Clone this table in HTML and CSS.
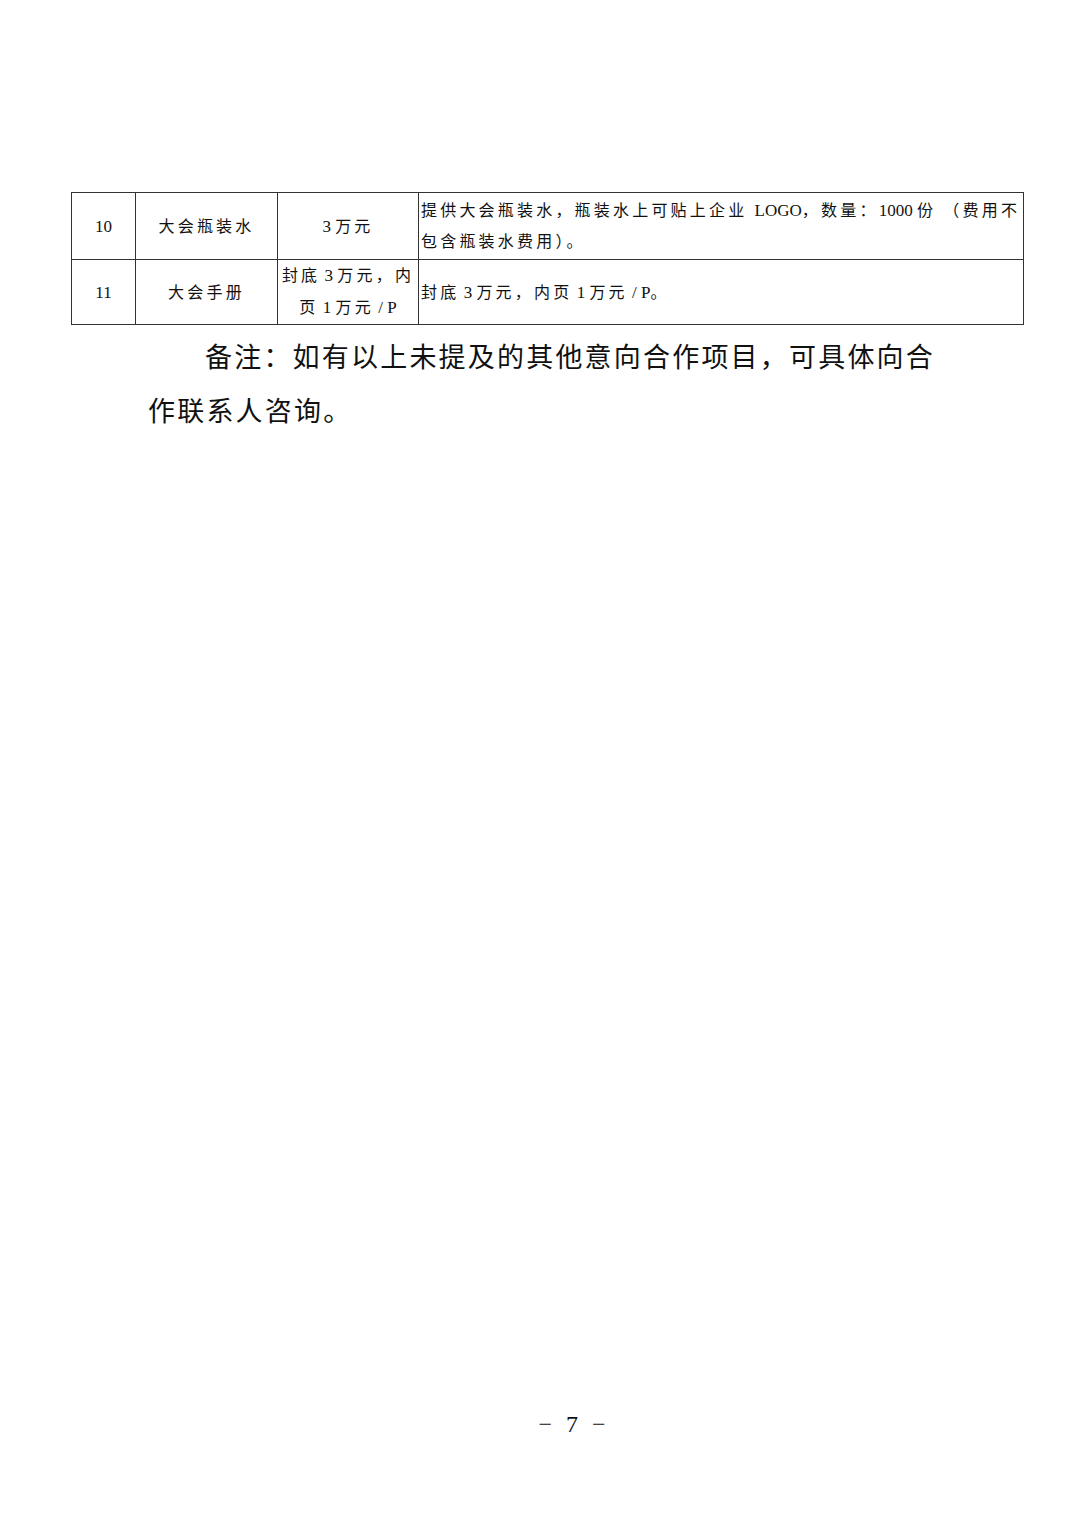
FILE: index.html
```html
<!DOCTYPE html>
<html lang="zh-CN">
<head>
<meta charset="utf-8">
<link rel="stylesheet" href="styles.css">
</head>
<body>
<div class="page">
  <table class="items">
    <colgroup>
      <col class="c-no"><col class="c-name"><col class="c-price"><col class="c-desc">
    </colgroup>
    <tr class="r1">
      <td class="num">10</td>
      <td class="mid">大会瓶装水</td>
      <td class="mid"><span class="lat">3 </span>万元</td>
      <td class="desc">提供大会瓶装水，瓶装水上可贴上企业 <span class="lat">LOGO</span>，数量：<span class="lat">1000 </span>份 （费用不包含瓶装水费用）。</td>
    </tr>
    <tr class="r2">
      <td class="num">11</td>
      <td class="mid">大会手册</td>
      <td class="mid price2">封底<span class="lat"> 3 </span>万元，内<br>页<span class="lat"> 1 </span>万元<span class="lat"> / P</span></td>
      <td class="desc">封底<span class="lat"> 3 </span>万元，内页<span class="lat"> 1 </span>万元<span class="lat"> / P</span>。</td>
    </tr>
  </table>
  <p class="note">备注：如有以上未提及的其他意向合作项目，可具体向合作联系人咨询。</p>
  <div class="pageno"><span>−</span><span>7</span><span>−</span></div>
</div>
</body>
</html>
```
FILE: styles.css
```css
html, body {
  margin: 0;
  padding: 0;
  background: #fff;
}
.page {
  width: 1080px;
  height: 1527px;
  box-sizing: border-box;
  padding-top: 192px;
  display: flex;
  flex-direction: column;
  font-family: "Liberation Serif", "Noto Sans CJK SC", serif;
  color: #111;
}
.items {
  margin-left: 71px;
  width: 952px;
  border-collapse: collapse;
  table-layout: fixed;
  font-size: 16px;
  letter-spacing: 3.2px;
}
.c-no { width: 64px; }
.c-name { width: 142px; }
.c-price { width: 141px; }
.c-desc { width: 605px; }
.items td {
  border: 1.5px solid #333;
  padding: 2px 0;
  line-height: 31px;
  vertical-align: middle;
  white-space: nowrap;
}
.items td.desc { white-space: normal; }
.items .r1 td { height: 62px; }
.items .r2 td { height: 62px; padding: 0; }
.items td.num, .items td.mid { text-align: center; }
.items td.num { letter-spacing: 0; font-size: 17px; }
.items td.price2 { line-height: 32px; }
.items td.desc { text-align: left; padding-left: 2px; }
.lat { letter-spacing: 0; font-size: 17px; }
.note {
  margin: 6px 0 0 148px;
  width: 800px;
  font-size: 27px;
  letter-spacing: 2.2px;
  line-height: 54px;
  text-indent: 57px;
}
.pageno {
  margin-top: auto;
  padding-bottom: 88px;
  padding-left: 64px;
  display: flex;
  justify-content: center;
  gap: 14px;
  font-size: 24px;
  line-height: 30px;
}
```
